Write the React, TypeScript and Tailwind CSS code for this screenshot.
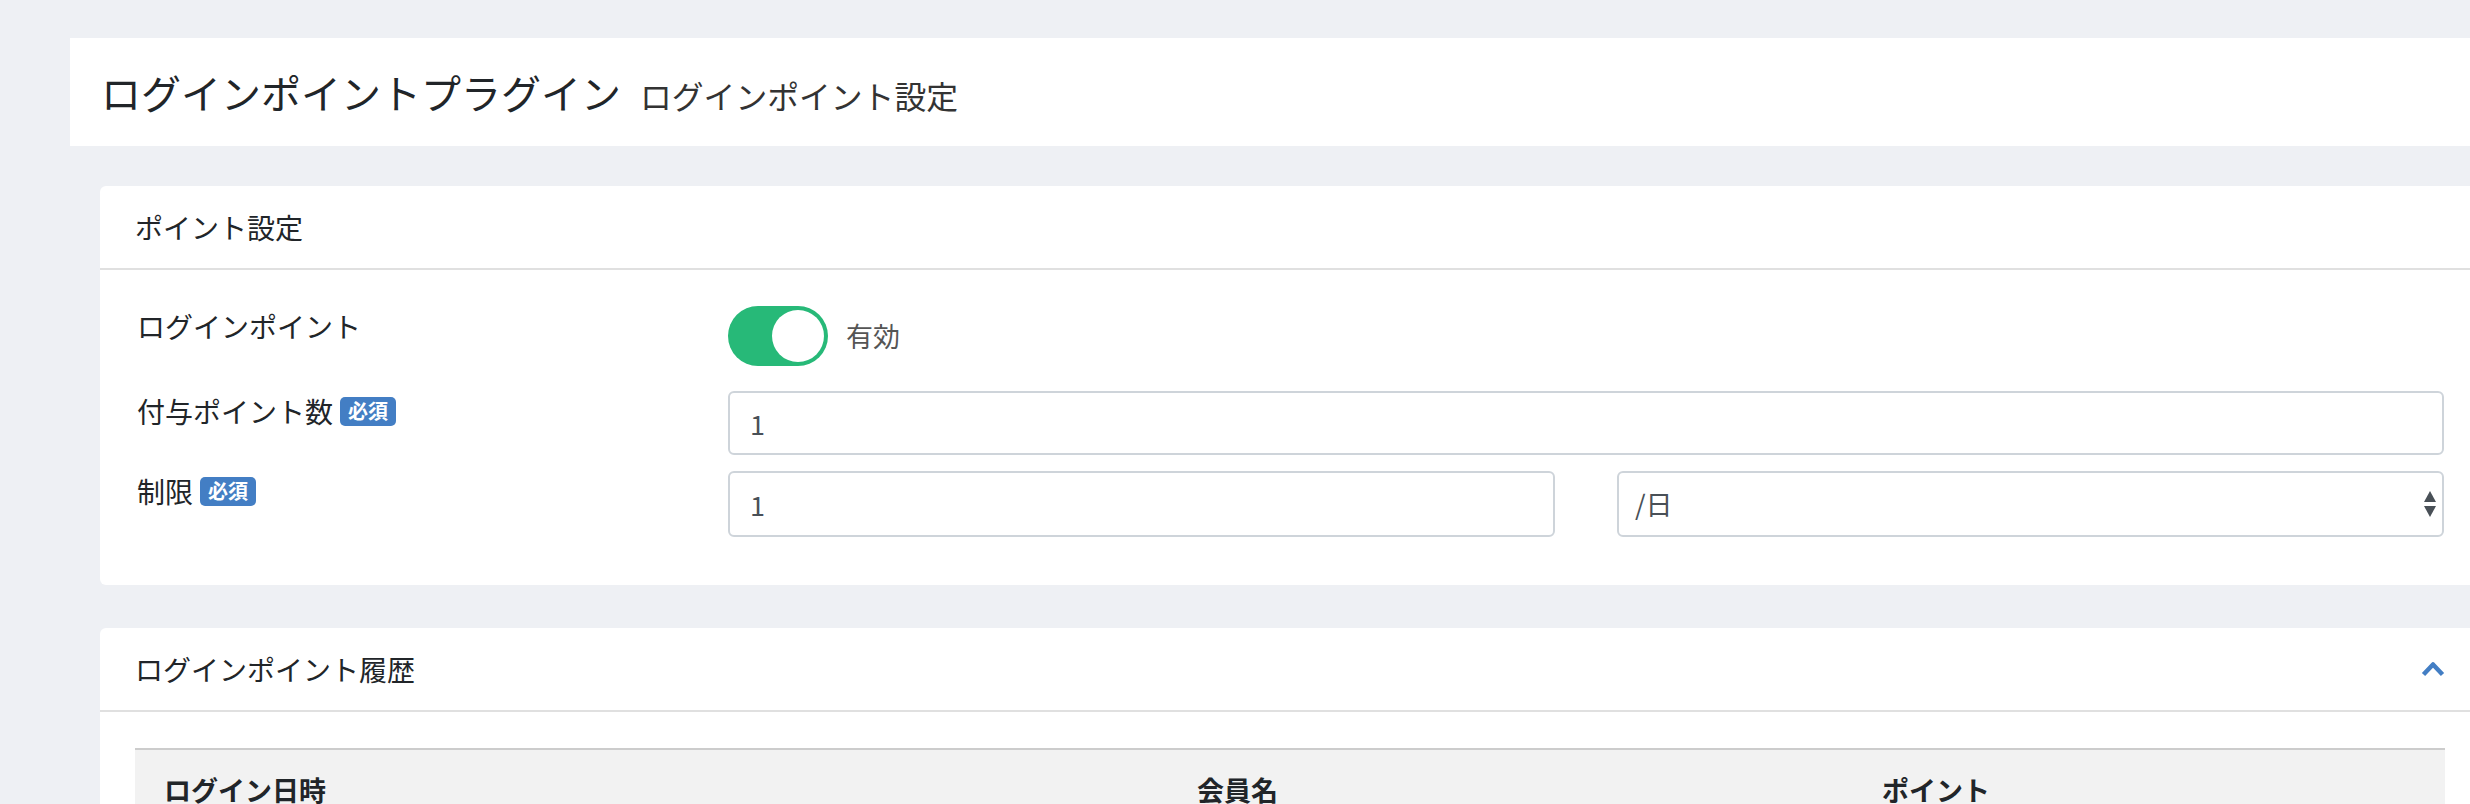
const jp = { fontFamily: '"Noto Sans CJK JP", "Noto Sans", sans-serif' };

function Required() {
  return (
    <span className="ml-[7px] inline-flex h-[29px] items-center rounded-[5px] bg-[#437ec4] px-[8px] text-[20px] font-bold leading-none text-white">
      必須
    </span>
  );
}

function Toggle() {
  return (
    <div className="flex items-center gap-[18px]">
      <div className="flex h-[60px] w-[100px] items-center justify-end rounded-full bg-[#27b978] p-[4px]">
        <div className="h-[52px] w-[52px] rounded-full bg-white" />
      </div>
      <span className="text-[27px] text-[#555]">有効</span>
    </div>
  );
}

function SelectArrows() {
  return (
    <svg width="12" height="26" viewBox="0 0 12 26" fill="#495057">
      <polygon points="6,0 12,11 0,11" />
      <polygon points="0,15 12,15 6,26" />
    </svg>
  );
}

export default function App() {
  return (
    <div
      className="h-[804px] overflow-hidden bg-[#eef0f4] pt-[38px] text-[#212529]"
      style={jp}
    >
      {/* page title */}
      <div className="ml-[70px] flex h-[108px] items-center bg-white pl-[31px]">
        <div className="flex items-baseline">
          <h1 className="text-[40px] font-normal leading-none">ログインポイントプラグイン</h1>
          <span className="ml-[19px] text-[31.8px] leading-none text-[#333]">ログインポイント設定</span>
        </div>
      </div>

      <div className="ml-[100px] mt-[40px] flex flex-col gap-[43px]">
        {/* ポイント設定 */}
        <div className="rounded-l-md bg-white">
          <div className="flex h-[84px] items-center border-b-2 border-[#e0e0e0] pl-[35px]">
            <span className="text-[28px]">ポイント設定</span>
          </div>
          <div className="pl-[37px] pr-[26px] pb-[48px] pt-[36px] text-[28px]">
            <div className="grid grid-cols-[591px_1fr]">
              <div className="leading-[40px]">ログインポイント</div>
              <Toggle />
            </div>
            <div className="mt-[25px] grid grid-cols-[591px_1fr]">
              <div className="flex h-[40px] items-center leading-[40px]">
                付与ポイント数
                <Required />
              </div>
              <input
                readOnly
                value="1"
                className="h-[64px] w-full rounded-md border-2 border-[#ced4da] px-[20px] text-[27px] text-[#495057] outline-none"
              />
            </div>
            <div className="mt-[16px] grid grid-cols-[591px_1fr]">
              <div className="flex h-[40px] items-center leading-[40px]">
                制限
                <Required />
              </div>
              <div className="grid grid-cols-2 gap-[62px]">
                <input
                  readOnly
                  value="1"
                  className="h-[66px] w-full rounded-md border-2 border-[#ced4da] px-[20px] text-[27px] text-[#495057] outline-none"
                />
                <div className="flex h-[66px] items-center justify-between rounded-md border-2 border-[#ced4da] pl-[16px] pr-[6px] text-[27px] text-[#495057]">
                  <span>/日</span>
                  <SelectArrows />
                </div>
              </div>
            </div>
          </div>
        </div>

        {/* ログインポイント履歴 */}
        <div className="rounded-l-md bg-white">
          <div className="flex h-[84px] items-center justify-between border-b-2 border-[#e0e0e0] pl-[35px] pr-[25px]">
            <span className="text-[28px]">ログインポイント履歴</span>
            <svg width="24" height="16" viewBox="0 0 24 16" fill="none" stroke="#437ec4" strokeWidth="4.5" strokeLinejoin="round">
              <path d="M2.5 13.5 L12 3.5 L21.5 13.5" />
            </svg>
          </div>
          <div className="pl-[35px] pr-[25px] pt-[36px]">
            <table className="w-full table-fixed border-t-2 border-[#cccccc] bg-[#f2f2f2] text-left text-[27px]">
              <colgroup>
                <col className="w-[1033px]" />
                <col className="w-[685px]" />
                <col />
              </colgroup>
              <thead>
                <tr>
                  <th className="px-[29px] pt-[20px] pb-[22px] font-bold">ログイン日時</th>
                  <th className="px-[29px] pt-[20px] pb-[22px] font-bold">会員名</th>
                  <th className="px-[29px] pt-[20px] pb-[22px] font-bold">ポイント</th>
                </tr>
              </thead>
            </table>
          </div>
        </div>
      </div>
    </div>
  );
}
